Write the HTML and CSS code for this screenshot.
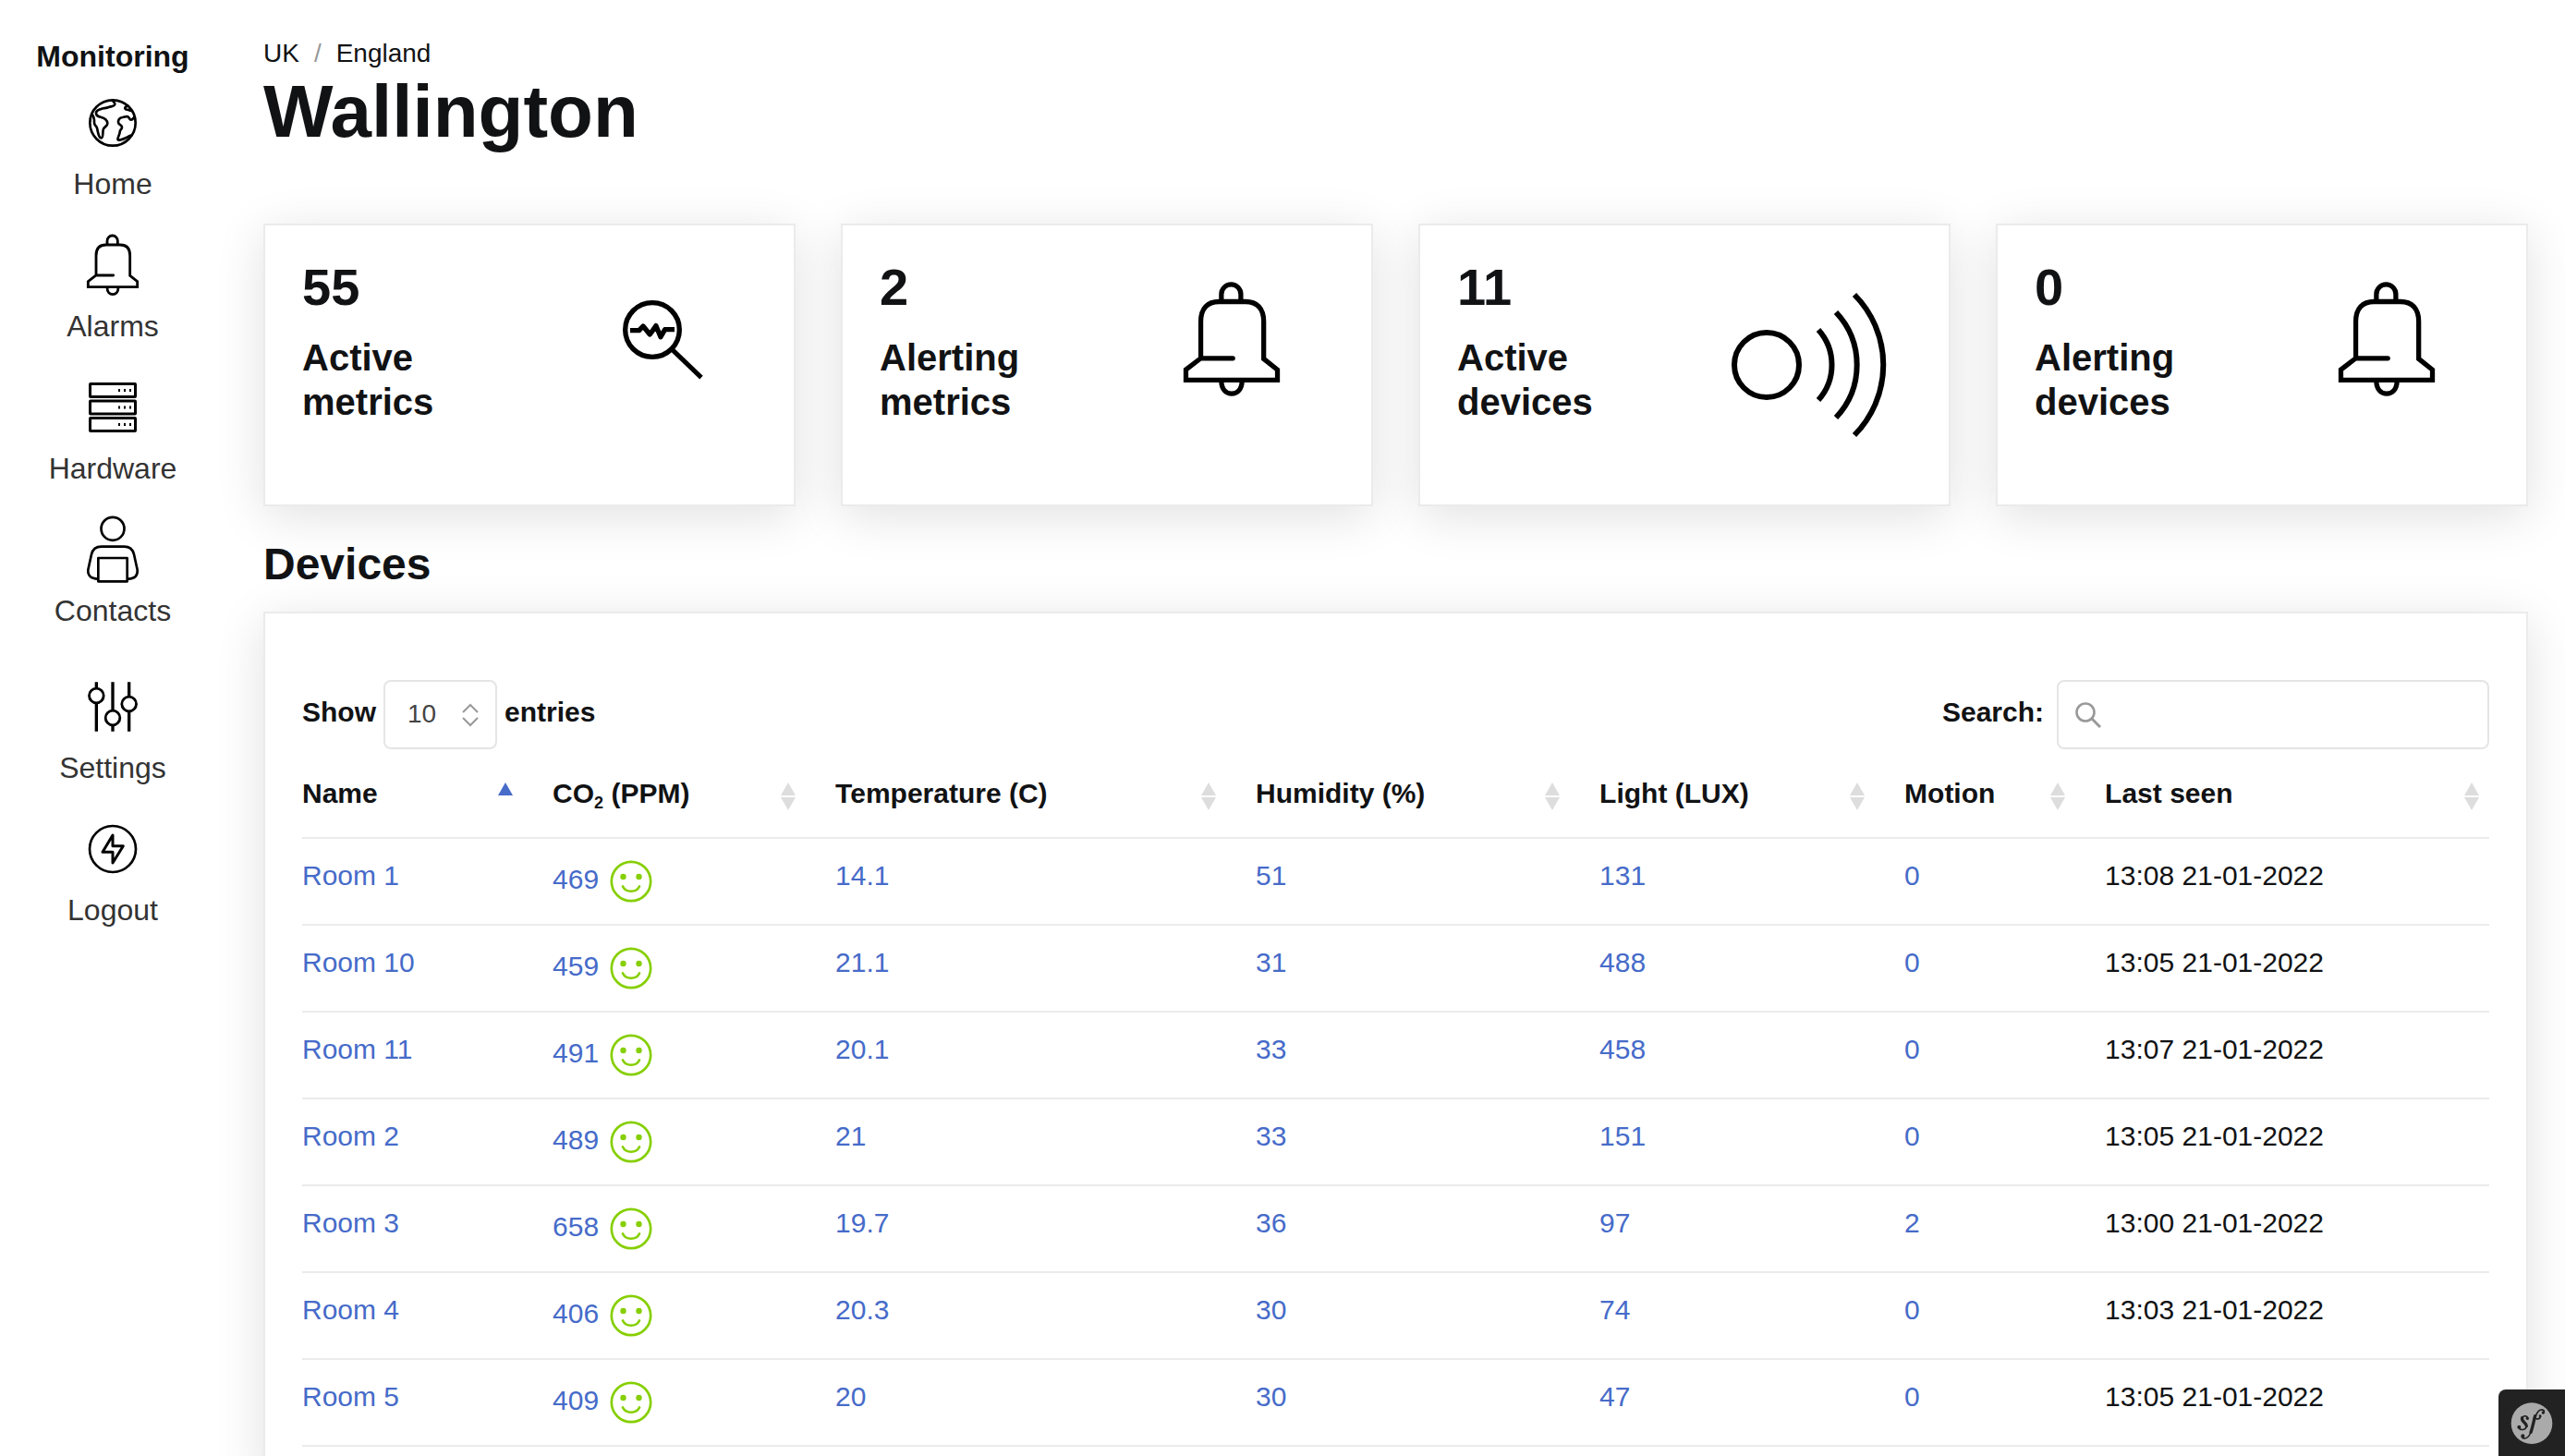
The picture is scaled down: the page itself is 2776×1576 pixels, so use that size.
FILE: index.html
```html
<!DOCTYPE html>
<html lang="en">
<head>
<meta charset="utf-8">
<title>Wallington</title>
<link rel="stylesheet" href="styles.css">
</head>
<body>
<svg class="sprite" aria-hidden="true">
  <symbol id="bell" viewBox="0 0 252 240">
    <g fill="none" stroke="#000" stroke-width="8.500" stroke-linecap="round">
      <path d="M108 56V44a17 17 0 0 1 34 0v12"/>
      <path d="M128 156H72L46 176v18h160v-18l-24-19V92c0-24-12-35-32-35h-46c-20 0-32 11-32 35v64"/>
      <path d="M108 196c0 14 8 22 18 22s18-8 18-22"/>
    </g>
  </symbol>
  <symbol id="smile" viewBox="0 0 46 46">
    <circle cx="23" cy="23" r="21.200" fill="none" stroke="#86cf00" stroke-width="2.700"/>
    <circle cx="14.500" cy="18" r="3.200" fill="#86cf00"/>
    <circle cx="31.500" cy="18" r="3.200" fill="#86cf00"/>
    <path d="M14 28.500c3.500 7 14.500 7 18 0" fill="none" stroke="#86cf00" stroke-width="2.700" stroke-linecap="round"/>
  </symbol>
  <symbol id="sort" viewBox="0 0 16 30">
    <path class="sort-up" d="M8 0l8 14H0z"/>
    <path class="sort-down" d="M8 30l8-14H0z"/>
  </symbol>
</svg>

<div class="shell">
  <nav class="sidebar">
    <strong class="brand">Monitoring</strong>
    <a class="nav-item" href="#">
      <svg class="nav-icon" viewBox="0 -10 252 240" fill="none" stroke="#000" stroke-width="8" stroke-linejoin="round">
        <circle cx="126" cy="110" r="74"/>
        <path d="M126 37c2 6 8 8 7 13-2 7-12 6-20 9-8 4-18 3-25 6-8 3-16 5-16 12-1 12 9 13 17 15 10 2 20 10 20 20 0 9-12 11-14 20-2 8 1 26-6 27-10 0-11-22-14-32-2-8-9-9-9-18 1-11-1-19-8-28"/>
        <path d="M198 90c-5 2-6 10-12 10-7 0-6-9-11-10-5-2-10 1-17 2-10 1-15 8-14 16 1 9 12 8 12 16 0 7-7 8-7 16 0 9-10 22-6 25 6 3 19-3 27-7 7-4 12-7 19-8"/>
        <path d="M178 52c-4 4-13 4-12 11 1 6 9 3 14 6l8 2"/>
      </svg>
      <span>Home</span>
    </a>
    <a class="nav-item" href="#">
      <svg class="nav-icon" viewBox="0 3 252 240"><use href="#bell" width="252" height="240"/></svg>
      <span>Alarms</span>
    </a>
    <a class="nav-item" href="#">
      <svg class="nav-icon" viewBox="0 0 84 80" fill="none" stroke="#000" stroke-width="3">
        <rect x="17.500" y="14.500" width="49" height="14" rx="0.500"/>
        <rect x="17.500" y="33" width="49" height="14" rx="0.500"/>
        <rect x="17.500" y="51.500" width="49" height="14" rx="0.500"/>
        <path d="M48 21.500h2m4 0h2m4 0h2M48 40h2m4 0h2m4 0h2M48 58.500h2m4 0h2m4 0h2"/>
      </svg>
      <span>Hardware</span>
    </a>
    <a class="nav-item" href="#">
      <svg class="nav-icon" viewBox="240 105 252 240" fill="none" stroke="#000" stroke-width="8" stroke-linejoin="round">
        <circle cx="366" cy="157" r="37.500"/>
        <path d="M318 320c-22-2-34-10-32-30l11-50c4-16 15-25 32-25h74c17 0 28 9 32 25l11 50c2 20-8 28-30 30"/>
        <path d="M319 252h94v76h-94z"/>
      </svg>
      <span>Contacts</span>
    </a>
    <a class="nav-item nav-item-split" href="#">
      <svg class="nav-icon" viewBox="240 615 252 240" fill="none" stroke="#000" stroke-width="10">
        <path d="M313 655v18m0 50v92M366 655v91m0 50v19M419 655v46m0 50v64"/>
        <circle cx="313" cy="699" r="23.500" stroke-width="8.500"/>
        <circle cx="366" cy="771" r="23.500" stroke-width="8.500"/>
        <circle cx="419" cy="726" r="23.500" stroke-width="8.500"/>
      </svg>
      <span>Settings</span>
    </a>
    <a class="nav-item" href="#">
      <svg class="nav-icon" viewBox="240 1077 252 240" fill="none" stroke="#000" stroke-width="8" stroke-linejoin="round">
        <circle cx="366" cy="1197" r="75"/>
        <path d="M366 1152l-33 55h33v35l34-55h-34z" stroke-width="9"/>
      </svg>
      <span>Logout</span>
    </a>
  </nav>

  <main class="main">
    <div class="breadcrumb"><a href="#">UK</a><span class="slash">/</span><a href="#">England</a></div>
    <h1>Wallington</h1>

    <section class="cards">
      <article class="card">
        <div><p class="count">55</p><p class="caption">Active metrics</p></div>
        <svg class="card-icon" viewBox="0 0 200 222">
          <svg x="53" y="26" width="120" height="110" viewBox="0 0 360 330" fill="none" stroke="#000">
            <circle cx="138" cy="141" r="88" stroke-width="16"/>
            <path d="M200 203l97 93" stroke-width="15"/>
            <path d="M66 143h29l13-14 22 27 20-28 15 36 14-24h31" stroke-width="16" stroke-linejoin="round"/>
          </svg>
        </svg>
      </article>
      <article class="card">
        <div><p class="count">2</p><p class="caption">Alerting metrics</p></div>
        <svg class="card-icon" viewBox="0 0 200 222"><use href="#bell" x="23" y="7" width="156" height="149"/></svg>
      </article>
      <article class="card">
        <div><p class="count">11</p><p class="caption">Active devices</p></div>
        <svg class="card-icon" viewBox="0 0 200 222" fill="none" stroke="#000" stroke-width="6">
          <circle cx="55" cy="111" r="35"/>
          <path d="M111 73a57 57 0 0 1 0 76M130 54a83 83 0 0 1 0 114M150 35a108 108 0 0 1 0 152"/>
        </svg>
      </article>
      <article class="card">
        <div><p class="count">0</p><p class="caption">Alerting devices</p></div>
        <svg class="card-icon" viewBox="0 0 200 222"><use href="#bell" x="23" y="7" width="156" height="149"/></svg>
      </article>
    </section>

    <h2>Devices</h2>
    <section class="panel">
      <div class="controls">
        <div class="length">
          <label for="length">Show</label>
          <div class="field">
            <select id="length"><option>10</option></select>
            <svg class="chevrons" viewBox="0 0 18 26" fill="none" stroke="#999" stroke-width="2"><path d="M1 10l8-8 8 8M1 16l8 8 8-8"/></svg>
          </div>
          <span>entries</span>
        </div>
        <div class="filter">
          <label for="search">Search:</label>
          <div class="field">
            <input id="search" type="search">
            <svg class="lens" viewBox="0 0 28 28" fill="none" stroke="#999"><circle cx="11" cy="11" r="9.500" stroke-width="2.600"/><path d="M17.500 17.500l9.500 9.500" stroke-width="3"/></svg>
          </div>
        </div>
      </div>

      <table>
        <colgroup>
          <col class="c-name"><col class="c-co2"><col class="c-temp"><col class="c-hum"><col class="c-light"><col class="c-motion"><col>
        </colgroup>
        <thead>
          <tr>
            <th><button type="button" class="asc"><span>Name</span><svg><use href="#sort"/></svg></button></th>
            <th><button type="button"><span>CO<sub>2</sub> (PPM)</span><svg><use href="#sort"/></svg></button></th>
            <th><button type="button"><span>Temperature (C)</span><svg><use href="#sort"/></svg></button></th>
            <th><button type="button"><span>Humidity (%)</span><svg><use href="#sort"/></svg></button></th>
            <th><button type="button"><span>Light (LUX)</span><svg><use href="#sort"/></svg></button></th>
            <th><button type="button"><span>Motion</span><svg><use href="#sort"/></svg></button></th>
            <th><button type="button"><span>Last seen</span><svg><use href="#sort"/></svg></button></th>
          </tr>
        </thead>
        <tbody>
          <tr><td><a href="#">Room 1</a></td><td class="co2"><a href="#">469<svg><use href="#smile"/></svg></a></td><td><a href="#">14.1</a></td><td><a href="#">51</a></td><td><a href="#">131</a></td><td><a href="#">0</a></td><td>13:08 21-01-2022</td></tr>
          <tr><td><a href="#">Room 10</a></td><td class="co2"><a href="#">459<svg><use href="#smile"/></svg></a></td><td><a href="#">21.1</a></td><td><a href="#">31</a></td><td><a href="#">488</a></td><td><a href="#">0</a></td><td>13:05 21-01-2022</td></tr>
          <tr><td><a href="#">Room 11</a></td><td class="co2"><a href="#">491<svg><use href="#smile"/></svg></a></td><td><a href="#">20.1</a></td><td><a href="#">33</a></td><td><a href="#">458</a></td><td><a href="#">0</a></td><td>13:07 21-01-2022</td></tr>
          <tr><td><a href="#">Room 2</a></td><td class="co2"><a href="#">489<svg><use href="#smile"/></svg></a></td><td><a href="#">21</a></td><td><a href="#">33</a></td><td><a href="#">151</a></td><td><a href="#">0</a></td><td>13:05 21-01-2022</td></tr>
          <tr><td><a href="#">Room 3</a></td><td class="co2"><a href="#">658<svg><use href="#smile"/></svg></a></td><td><a href="#">19.7</a></td><td><a href="#">36</a></td><td><a href="#">97</a></td><td><a href="#">2</a></td><td>13:00 21-01-2022</td></tr>
          <tr><td><a href="#">Room 4</a></td><td class="co2"><a href="#">406<svg><use href="#smile"/></svg></a></td><td><a href="#">20.3</a></td><td><a href="#">30</a></td><td><a href="#">74</a></td><td><a href="#">0</a></td><td>13:03 21-01-2022</td></tr>
          <tr><td><a href="#">Room 5</a></td><td class="co2"><a href="#">409<svg><use href="#smile"/></svg></a></td><td><a href="#">20</a></td><td><a href="#">30</a></td><td><a href="#">47</a></td><td><a href="#">0</a></td><td>13:05 21-01-2022</td></tr>
        </tbody>
      </table>
    </section>
  </main>
</div>

<button type="button" class="toolbar" aria-label="Symfony">
  <svg viewBox="12 12 216 216" fill="none" stroke="#222" stroke-linecap="round">
    <circle cx="120" cy="122" r="67" fill="#aaa" stroke="none"/>
    <path d="M107 106c0-8-10-10-16-5" stroke-width="5"/>
    <path d="M89 104c-5 12 15 15 14 27" stroke-width="10"/>
    <path d="M102 134c-4 11-20 11-24 2" stroke-width="5"/>
    <path d="M158 88c6-8-2-13-11-9-9 4-13 14-17 28" stroke-width="5"/>
    <path d="M131 98c-5 18-8 36-14 53" stroke-width="10"/>
    <path d="M117 150c-5 15-15 23-25 20-3-1-4-4-3-6M127 104c8 6 20 5 22-5" stroke-width="5"/>
    <g fill="#222" stroke="none">
      <circle cx="106" cy="106" r="5"/><circle cx="79" cy="134" r="6"/><circle cx="157" cy="87" r="5"/><circle cx="91" cy="163" r="6"/><circle cx="147" cy="98" r="4"/>
    </g>
  </svg>
</button>
</body>
</html>
```
FILE: styles.css
```css
* { box-sizing: border-box; }

body {
  margin: 0;
  background: #fff;
  color: #111214;
  font-family: "Liberation Sans", Arial, Helvetica, sans-serif;
  font-size: 30px;
  line-height: 45px;
}

a { color: inherit; text-decoration: none; }
h1, h2, p { margin: 0; }
button, select, input { font: inherit; color: inherit; }
.sprite { position: absolute; width: 0; height: 0; }

.shell {
  display: flex;
  height: 100vh;
  overflow: hidden;
}

/* Sidebar */
.sidebar {
  flex: none;
  width: 244px;
  padding-top: 41px;
  display: flex;
  flex-direction: column;
  align-items: center;
  font-size: 32px;
  line-height: 40px;
}
.brand { margin-bottom: 12px; }
.nav-item {
  display: flex;
  flex-direction: column;
  align-items: center;
  gap: 6px;
  margin-bottom: 28px;
  color: #333;
}
.nav-item-split { margin-top: 16px; }
.nav-icon { width: 84px; height: 80px; }

/* Page header */
.main {
  flex: 1;
  min-width: 0;
  padding: 42px 40px 0 41px;
}
.breadcrumb {
  display: flex;
  gap: 16px;
  font-size: 28px;
  line-height: 32px;
}
.slash { color: #999; }
h1 { font-size: 80px; line-height: 94px; }
h2 { margin: 34px 0 22px; font-size: 48px; line-height: 58px; }

/* Summary cards */
.cards {
  display: grid;
  grid-template-columns: repeat(4, 1fr);
  gap: 49px;
  margin-top: 74px;
}
.card, .panel {
  background: #fff;
  border: 2px solid #ebebeb;
  box-shadow: 0 10px 50px rgba(0, 0, 0, 0.12);
}
.card {
  display: grid;
  grid-template-columns: 1fr 1fr;
  gap: 42px;
  padding: 40px;
  font-weight: bold;
}
.count { font-size: 56px; line-height: 54px; }
.caption { margin-top: 25px; font-size: 40px; line-height: 48px; }
.card-icon { width: 200px; height: 222px; justify-self: center; }

/* Device table panel */
.panel { padding: 72px 40px 40px; }
.controls {
  display: flex;
  justify-content: space-between;
  font-weight: bold;
  line-height: 70px;
}
.length, .filter { display: flex; align-items: flex-start; }
.length { gap: 8px; }
.filter { gap: 14px; }
.field { position: relative; height: 76px; }
select, input {
  appearance: none;
  display: block;
  height: 75px;
  background: #fff;
  border: 2px solid #e5e5e5;
  border-radius: 8px;
  outline: none;
}
select {
  width: 123px;
  padding: 0 24px 6px;
  color: #444;
  font-size: 28px;
  font-weight: normal;
}
input { width: 468px; padding: 0 24px 0 64px; font-weight: normal; }
.chevrons, .lens { position: absolute; pointer-events: none; }
.chevrons { top: 25px; right: 20px; width: 18px; height: 26px; }
.lens { top: 24px; left: 20px; width: 28px; height: 28px; }

table {
  width: 100%;
  border-collapse: separate;
  border-spacing: 0;
  table-layout: fixed;
}
.c-name { width: 10.1%; }
.c-co2 { width: 12.93%; }
.c-temp { width: 19.22%; }
.c-hum { width: 15.72%; }
.c-light { width: 13.94%; }
.c-motion { width: 9.17%; }

th, td {
  padding: 17px 11px 30px 32px;
  border-bottom: 2px solid #ebebeb;
  text-align: left;
  vertical-align: top;
}
th { padding-top: 24px; padding-bottom: 25px; }
th:first-child, td:first-child { padding-left: 0; }
th button {
  display: flex;
  justify-content: space-between;
  align-items: center;
  width: 100%;
  padding: 0;
  border: 0;
  background: none;
  font-weight: bold;
  text-align: left;
  line-height: 45px;
}
th svg { width: 16px; height: 30px; margin-top: 6px; flex: none; fill: #ddd; }
.asc svg { fill: #466bc9; }
.asc use { --down: none; }
.sort-down { display: var(--down, inline); }
sub { font-size: 18px; line-height: 0; vertical-align: -6px; }

td a { color: #466bc9; }
td.co2 { padding-top: 21px; padding-bottom: 0; }
.co2 a { display: flex; gap: 12px; }
.co2 svg { width: 46px; height: 46px; margin-top: 2px; }

/* Debug toolbar toggle */
.toolbar {
  position: fixed;
  right: 0;
  bottom: 0;
  width: 72px;
  height: 72px;
  padding: 0;
  border: 0;
  border-radius: 8px 0 0 0;
  background: #222;
}
.toolbar svg { display: block; width: 72px; height: 72px; }
```
